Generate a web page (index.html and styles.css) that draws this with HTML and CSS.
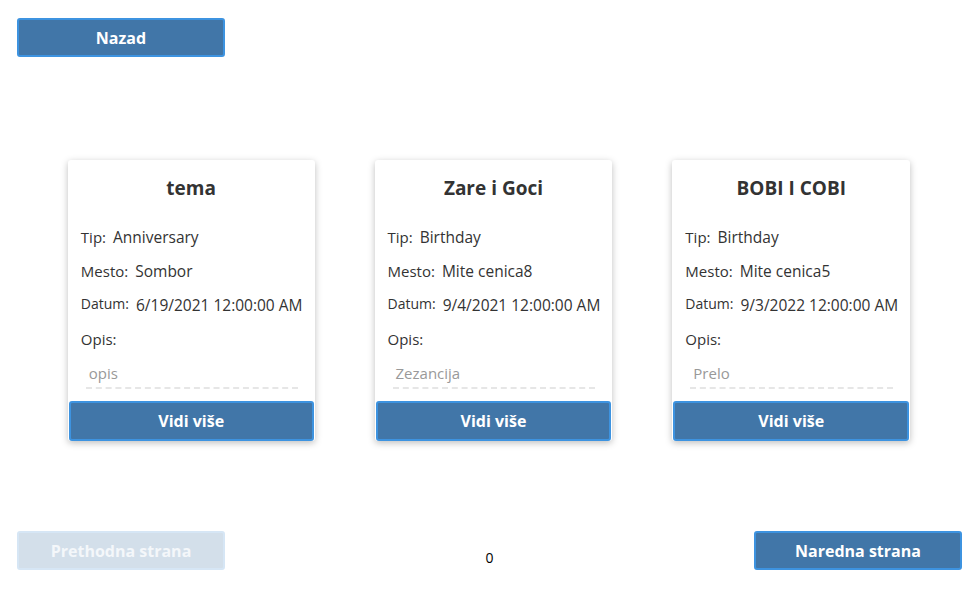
FILE: index.html
```html
<!DOCTYPE html>
<html>
<head>
<meta charset="utf-8">
<link rel="stylesheet" href="styles.css">
</head>
<body>
<div class="page">
  <div class="top">
    <button class="btn">Nazad</button>
  </div>
  <div class="cards">
    <div class="card">
      <h2 class="title">tema</h2>
      <div class="row"><span class="lbl">Tip:</span><span class="val">Anniversary</span></div>
      <div class="row"><span class="lbl">Mesto:</span><span class="val">Sombor</span></div>
      <div class="row datum"><span class="lbl">Datum:</span><span class="val">6/19/2021 12:00:00 AM</span></div>
      <div class="row"><span class="lbl">Opis:</span></div>
      <div class="opis">opis</div>
      <button class="btn card-btn">Vidi više</button>
    </div>
    <div class="card">
      <h2 class="title">Zare i Goci</h2>
      <div class="row"><span class="lbl">Tip:</span><span class="val">Birthday</span></div>
      <div class="row"><span class="lbl">Mesto:</span><span class="val">Mite cenica8</span></div>
      <div class="row datum"><span class="lbl">Datum:</span><span class="val">9/4/2021 12:00:00 AM</span></div>
      <div class="row"><span class="lbl">Opis:</span></div>
      <div class="opis">Zezancija</div>
      <button class="btn card-btn">Vidi više</button>
    </div>
    <div class="card">
      <h2 class="title">BOBI I COBI</h2>
      <div class="row"><span class="lbl">Tip:</span><span class="val">Birthday</span></div>
      <div class="row"><span class="lbl">Mesto:</span><span class="val">Mite cenica5</span></div>
      <div class="row datum"><span class="lbl">Datum:</span><span class="val">9/3/2022 12:00:00 AM</span></div>
      <div class="row"><span class="lbl">Opis:</span></div>
      <div class="opis">Prelo</div>
      <button class="btn card-btn">Vidi više</button>
    </div>
  </div>
  <div class="pager">
    <button class="btn disabled">Prethodna strana</button>
    <span class="page-num">0</span>
    <button class="btn">Naredna strana</button>
  </div>
</div>
</body>
</html>
```

FILE: styles.css
```css
* { box-sizing: border-box; }
body {
  margin: 0;
  background: #fff;
  font-family: "Open Sans", "Noto Sans", sans-serif;
  color: #333;
}
.page {
  padding: 18px 16px 0 17px;
}
.btn {
  display: block;
  width: 208px;
  height: 39px;
  background: #4176a8;
  border: 2px solid #3d93e0;
  border-radius: 3px;
  color: #fff;
  font-family: "Open Sans", sans-serif;
  font-weight: 700;
  font-size: 16px;
  padding: 0;
}
.btn.disabled {
  background: #d3dfea;
  border-color: #d6e6f5;
  color: #f4f7fa;
}
.cards {
  display: flex;
  justify-content: center;
  gap: 60px;
  margin-top: 103px;
  padding-right: 1px;
}
.card {
  background: #fff;
  border-radius: 3px;
  box-shadow: 0 2px 7px rgba(0,0,0,0.26);
  padding: 13px 0 0 0;
  display: flex;
  flex-direction: column;
}
.title {
  margin: 0 13px;
  text-align: center;
  font-size: 19px;
  font-weight: 700;
  line-height: 30px;
  color: #333;
}
.row {
  display: flex;
  gap: 7px;
  margin: 0 12px 0 13px;
  font-size: 15px;
  line-height: 20px;
  height: 34px;
  align-items: flex-start;
  white-space: nowrap;
}
.row .val { font-size: 15.5px; }
.title + .row { margin-top: 24px; }
.datum .lbl { font-size: 14px; line-height: 18px; }
.opis {
  margin: 0 17px 0 18px;
  padding: 0 3px 4px;
  font-size: 15px;
  line-height: 20px;
  color: #999;
  border-bottom: 2px dashed #e6e6e6;
}
.card-btn {
  width: auto;
  height: 40px;
  margin: 12px 1px 0;
  font-size: 16px;
}
.pager {
  display: flex;
  justify-content: space-between;
  align-items: flex-end;
  margin-top: 90px;
}
.page-num {
  font-size: 14px;
  line-height: 24px;
  color: #000;
  font-family: "Open Sans", sans-serif;
}
```
